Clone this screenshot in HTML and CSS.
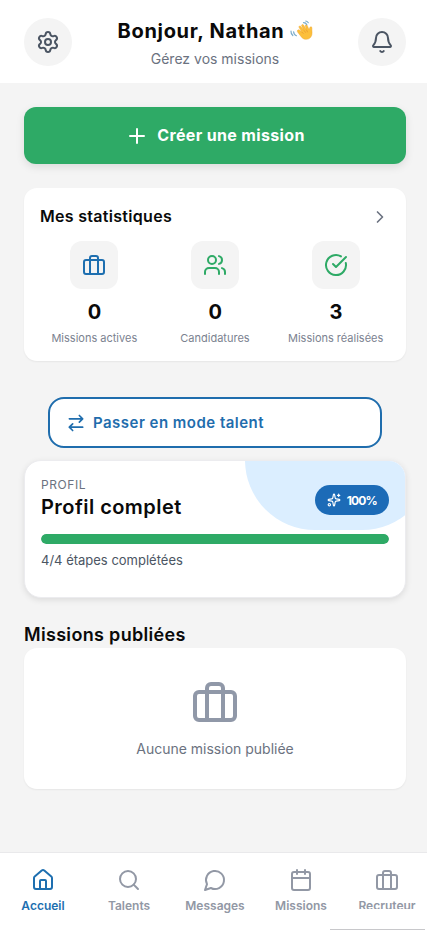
FILE: index.html
```
<!DOCTYPE html>
<html lang="fr">
<head>
<meta charset="utf-8">
<meta name="viewport" content="width=device-width, initial-scale=1">
<title>Accueil</title>
<link rel="stylesheet" href="styles.css">
</head>
<body>
<svg class="sprite" aria-hidden="true">
  <symbol id="case" viewBox="0 0 24 24"><rect x="2" y="7" width="20" height="14" rx="2"/><path d="M16 21V5a2 2 0 0 0-2-2h-4a2 2 0 0 0-2 2v16"/></symbol>
</svg>
<div class="app">
  <header class="header">
    <button class="round"><svg class="icon" viewBox="0 0 24 24"><path d="M9.671 4.136a2.34 2.34 0 0 1 4.659 0 2.34 2.34 0 0 0 3.319 1.915 2.34 2.34 0 0 1 2.33 4.033 2.34 2.34 0 0 0 0 3.831 2.34 2.34 0 0 1-2.33 4.033 2.34 2.34 0 0 0-3.319 1.915 2.34 2.34 0 0 1-4.659 0 2.34 2.34 0 0 0-3.32-1.915 2.34 2.34 0 0 1-2.33-4.033 2.34 2.34 0 0 0 0-3.831A2.34 2.34 0 0 1 6.35 6.051a2.34 2.34 0 0 0 3.319-1.915"/><circle cx="12" cy="12" r="3"/></svg></button>
    <div class="greeting">
      <h1><span>Bonjour, Nathan</span>
        <svg class="wave" viewBox="0 0 24 24"><g transform="translate(4.500 .6) scale(.88)"><path class="hand" d="M4.600 12.200c.9-1 2-.5 2.800.2l2 1.700-3-5c-.9-1.500.9-2.700 2-1.300l3.400 4.500-2.500-5.100c-.7-1.600 1.300-2.500 2.200-1l3 5.300-1-4.300c-.3-1.500 1.500-1.900 2.100-.6l2.100 5 .9-2.600c.6-1.500 2.400-1 2.300.6-.2 3.500 1.100 7.200-1.200 10.300-2.600 3.400-7.600 3.300-10.300.4l-4.600-6c-.6-.7-.7-1.500-.2-2.100z"/><path class="crease" d="M9.400 14.100l2 2M12 12.300l2 2.600M14.800 11.700l1.300 2.700"/></g><path class="motion" d="M14.500 3.600c1.500 0 2.800.8 3.300 2.100M16.800 2c1.200.2 2 .8 2.500 1.700M4.600 12.800c.1 1.700 1.100 3.200 2.800 3.900M2 12.200c-.1 1.700.6 3.200 1.800 4.300"/></svg>
      </h1>
      <p>Gérez vos missions</p>
    </div>
    <button class="round"><svg class="icon" viewBox="0 0 24 24"><path d="M10.268 21a2 2 0 0 0 3.464 0M3.262 15.326A1 1 0 0 0 4 17h16a1 1 0 0 0 .74-1.673C19.410 13.956 18 12.499 18 8A6 6 0 0 0 6 8c0 4.499-1.411 5.956-2.738 7.326"/></svg></button>
  </header>

  <main class="main">
    <button class="create"><svg class="icon" viewBox="0 0 24 24"><path d="M5 12h14M12 5v14"/></svg><span>Créer une mission</span></button>

    <section class="card stats">
      <div class="stats-head"><h2>Mes statistiques</h2><svg class="icon chevron" viewBox="0 0 24 24"><path d="m9 18 6-6-6-6"/></svg></div>
      <div class="stats-grid">
        <div class="stat"><div class="tile blue"><svg class="icon"><use href="#case"/></svg></div><strong>0</strong><small>Missions actives</small></div>
        <div class="stat"><div class="tile green"><svg class="icon" viewBox="0 0 24 24"><path d="M16 21v-2a4 4 0 0 0-4-4H6a4 4 0 0 0-4 4v2"/><circle cx="9" cy="7" r="4"/><path d="M22 21v-2a4 4 0 0 0-3-3.870M16 3.130a4 4 0 0 1 0 7.750"/></svg></div><strong>0</strong><small>Candidatures</small></div>
        <div class="stat"><div class="tile green"><svg class="icon" viewBox="0 0 24 24"><path d="M21.801 10A10 10 0 1 1 17 3.335"/><path d="m9 11 3 3L22 4"/></svg></div><strong>3</strong><small>Missions réalisées</small></div>
      </div>
    </section>

    <button class="switch"><svg class="icon" viewBox="0 0 24 24"><path d="m16 3 4 4-4 4M20 7H4M8 21l-4-4 4-4M4 17h16"/></svg><span>Passer en mode talent</span></button>

    <section class="profile">
      <div class="profile-top">
        <div><div class="eyebrow">PROFIL</div><h2>Profil complet</h2></div>
        <div class="badge"><svg class="icon" viewBox="0 0 24 24"><path d="M11.017 2.814a1 1 0 0 1 1.966 0l1.051 5.558a2 2 0 0 0 1.594 1.594l5.558 1.051a1 1 0 0 1 0 1.966l-5.558 1.051a2 2 0 0 0-1.594 1.594l-1.051 5.558a1 1 0 0 1-1.966 0l-1.051-5.558a2 2 0 0 0-1.594-1.594l-5.558-1.051a1 1 0 0 1 0-1.966l5.558-1.051a2 2 0 0 0 1.594-1.594zM20 2v4M22 4h-4"/><circle cx="4" cy="20" r="2"/></svg><span>100%</span></div>
      </div>
      <div class="bar"><div class="fill" style="width:100%"></div></div>
      <p>4/4 étapes complétées</p>
    </section>

    <h2 class="section-title"><span>Missions publiées</span></h2>
    <section class="card empty"><svg class="icon"><use href="#case"/></svg><p>Aucune mission publiée</p></section>
  </main>

  <nav class="nav">
    <a class="tab active"><svg class="icon" viewBox="0 0 24 24"><path d="M15 21v-8a1 1 0 0 0-1-1h-4a1 1 0 0 0-1 1v8"/><path d="M3 10a2 2 0 0 1 .709-1.528l7-5.999a2 2 0 0 1 2.582 0l7 5.999A2 2 0 0 1 21 10v9a2 2 0 0 1-2 2H5a2 2 0 0 1-2-2z"/></svg><span>Accueil</span></a>
    <a class="tab"><svg class="icon" viewBox="0 0 24 24"><circle cx="11" cy="11" r="8"/><path d="m21 21-4.340-4.340"/></svg><span>Talents</span></a>
    <a class="tab"><svg class="icon" viewBox="0 0 24 24"><path d="M7.900 20A9 9 0 1 0 4 16.100L2 22Z"/></svg><span>Messages</span></a>
    <a class="tab"><svg class="icon" viewBox="0 0 24 24"><rect x="3" y="4" width="18" height="18" rx="2"/><path d="M8 2v4M16 2v4M3 10h18"/></svg><span>Missions</span></a>
    <a class="tab clipped"><svg class="icon"><use href="#case"/></svg><span>Recruteur</span></a>
    <div class="edge"></div>
  </nav>
</div>
</body>
</html>
```
FILE: styles.css
```
* { box-sizing: border-box; margin: 0; padding: 0; }
html { overflow: hidden; }
body { overflow: hidden; background: #f4f4f4; color: #0a0a0a; font-family: Inter, sans-serif; }
button { border: 0; font: inherit; }
.sprite { position: absolute; width: 0; height: 0; }
.icon { display: block; flex: none; width: 24px; height: 24px; fill: none; stroke: currentColor; stroke-width: 2; stroke-linecap: round; stroke-linejoin: round; }
.app { width: 430px; height: 930px; display: flex; flex-direction: column; overflow: hidden; }

.header { height: 84px; padding: 0 24px; background: #fff; border-bottom: 1px solid #f4f4f4; display: flex; align-items: center; justify-content: space-between; }
.round { width: 48px; height: 48px; border-radius: 50%; background: #f4f4f4; color: #4b5563; display: grid; place-items: center; }
.greeting { text-align: center; padding-top: 2px; }
.greeting h1 { display: flex; align-items: center; justify-content: center; gap: 4px; font-size: 20px; line-height: 28px; font-weight: 700; letter-spacing: .7px; }
.wave { width: 24px; height: 24px; }
.hand { fill: #fcbf3b; stroke: #eda633; stroke-width: .5; }
.crease { fill: none; stroke: #e5942c; stroke-width: .8; }
.motion { fill: none; stroke: #7aaccb; stroke-width: 1.200; stroke-linecap: round; }
.greeting p { margin-top: 4px; font-size: 14px; line-height: 20px; color: #6b7280; }

.main { flex: 1; padding: 23px 24px 0; display: flex; flex-direction: column; }
.create { height: 57px; flex: none; border-radius: 12px; background: #2eaa66; color: #fff; display: flex; align-items: center; justify-content: center; gap: 8px; font-size: 16px; font-weight: 700; letter-spacing: .35px; box-shadow: 0 3px 8px rgba(0,0,0,.1); }
.create span { margin-top: -1px; }
.card { background: #fff; border-radius: 13px; box-shadow: 0 1px 2px rgba(0,0,0,.06); }
.stats { margin-top: 24px; height: 173px; padding: 16px; }
.stats-head { display: flex; align-items: center; justify-content: space-between; height: 25px; }
.stats-head h2 { margin-top: -2px; font-size: 16px; font-weight: 600; letter-spacing: .3px; }
.chevron { width: 20px; height: 20px; color: #6b7280; }
.stats-grid { display: grid; grid-template-columns: repeat(3, 1fr); gap: 12px; margin-top: 12px; }
.stat { display: flex; flex-direction: column; align-items: center; }
.tile { width: 48px; height: 48px; border-radius: 12px; background: #f4f4f4; display: grid; place-items: center; }
.blue { color: #1e6fb0; }
.green { color: #2eaa66; }
.stat strong { margin-top: 9px; font-size: 20px; line-height: 28px; font-weight: 700; letter-spacing: -.5px; }
.stat small { margin-top: 4px; font-size: 11px; line-height: 16px; color: #7b8290; white-space: nowrap; }

.switch { margin: 36px 24px 0; height: 51px; border: 2px solid #1f6dad; border-radius: 16px; background: #fff; color: #1f6dad; display: flex; align-items: center; gap: 7px; padding: 0 16px; font-size: 15px; font-weight: 600; letter-spacing: .48px; }
.switch .icon { width: 20px; height: 20px; }

.profile { position: relative; overflow: hidden; margin-top: 12px; height: 138px; border: 1px solid #ececef; border-radius: 17px; background: #fff; padding: 16px; box-shadow: 0 2px 6px rgba(0,0,0,.1); }
.profile::before { content: ""; position: absolute; right: -27px; top: -71px; width: 187px; height: 140px; border-radius: 70px; background: #dbeeff; }
.profile-top { position: relative; display: flex; justify-content: space-between; align-items: center; height: 45px; }
.profile-top > div:first-child { margin-top: -2px; }
.eyebrow { font-size: 12px; line-height: 16px; letter-spacing: .6px; color: #6b7280; }
.profile h2 { font-size: 20px; line-height: 28px; font-weight: 600; letter-spacing: .45px; }
.badge { height: 30px; margin-top: 1px; border-radius: 15px; padding: 0 12px; background: #1c6bb7; color: #fff; display: flex; align-items: center; gap: 6px; font-size: 12px; font-weight: 700; letter-spacing: -.8px; }
.badge .icon { width: 14px; height: 14px; }
.bar { position: relative; margin-top: 12px; height: 10px; border-radius: 5px; background: #e5e7eb; overflow: hidden; }
.fill { height: 100%; border-radius: 5px; background: #2eaa66; }
.profile p { margin-top: 6px; font-size: 13px; line-height: 20px; color: #4b5563; }

.section-title { margin-top: 23px; height: 27px; font-size: 18px; line-height: 28px; font-weight: 600; letter-spacing: .32px; }
.empty { height: 141px; padding-top: 30px; display: flex; flex-direction: column; align-items: center; }
.empty .icon { width: 48px; height: 48px; color: #9098a8; }
.empty p { margin-top: 13px; font-size: 14px; line-height: 20px; color: #6b7280; }

.nav { position: relative; height: 78px; padding-top: 15px; background: #fff; border-top: 1px solid #e9e9eb; display: grid; grid-template-columns: repeat(5, 1fr); align-items: start; }
.tab { display: flex; flex-direction: column; align-items: center; color: #9298a5; font-size: 12px; line-height: 16px; font-weight: 600; }
.tab span { margin-top: 6px; }
.active { color: #1e6fb0; }
.clipped { height: 41px; overflow: hidden; }
.edge { position: absolute; left: 330px; bottom: 0; width: 95px; height: 1px; background: #c8c8cb; }
```
